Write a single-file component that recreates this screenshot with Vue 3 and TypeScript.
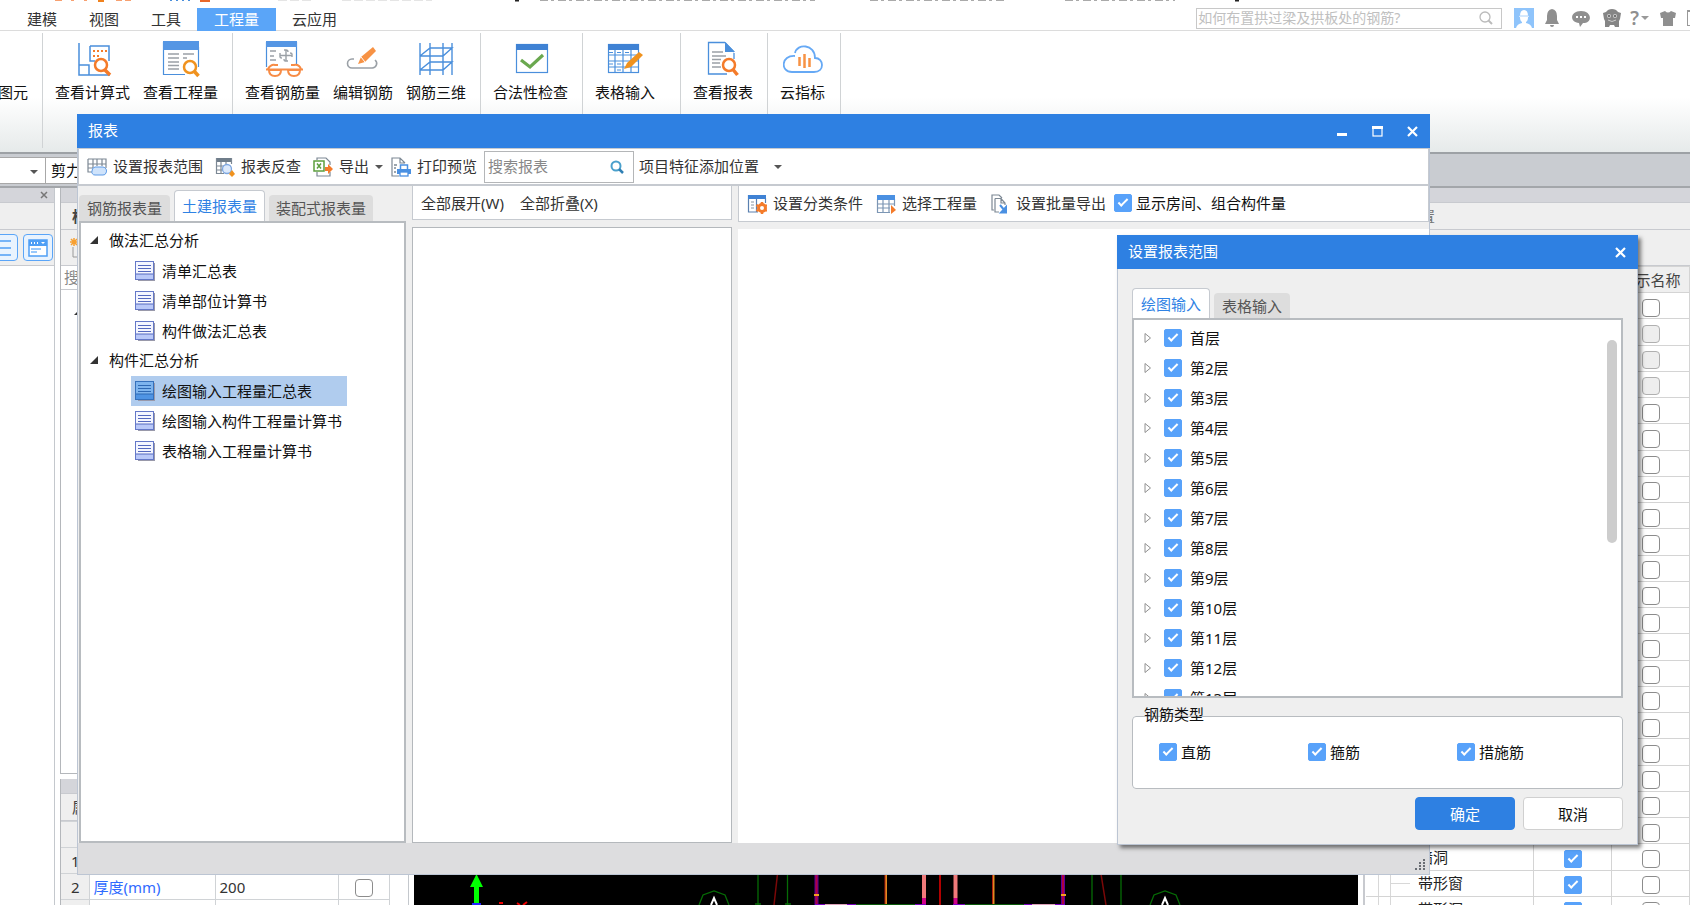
<script setup lang="ts">
import { ref } from 'vue'

interface RibbonItem { label: string; icon: string }
interface TreeGroup { label: string; children: string[] }
interface Floor { name: string; on: boolean }
interface LayerRow { name: string; shown: boolean; named: boolean; locked: boolean }

const menus: string[] = ['建模', '视图', '工具', '工程量', '云应用']
const activeMenu = ref('工程量')

const B = '#4a8fdc'
const O = '#f47b2a'
const icons: Record<string, string> = {
  calc: `<path d="M6 4V36H37M6 26H16V36" fill="none" stroke="${B}" stroke-width="1.5"/><path d="M17 7H36V22M17 7V22H22" fill="none" stroke="${B}" stroke-width="1.5"/><g fill="${O}"><rect x="20" y="11" width="2" height="2"/><rect x="24" y="11" width="2" height="2"/><rect x="28" y="11" width="2" height="2"/><rect x="32" y="11" width="2" height="2"/><rect x="20" y="16" width="2" height="2"/><rect x="24" y="16" width="2" height="2"/></g><circle cx="28" cy="26" r="6" fill="#fff" stroke="${O}" stroke-width="2.5"/><path d="M32 31L37 36" stroke="${O}" stroke-width="3.5"/>`,
  quantity: `<path d="M37.500 8V28M2.500 3V35.500H24" fill="none" stroke="${B}" stroke-width="1.200"/><rect x="2" y="2" width="36" height="9" fill="#5596e4"/><path d="M7 15H18M7 19H18M7 23H18M7 26.500H18M7 30H18M22 15H33M22 19H26" stroke="#9aa0a6" stroke-width="1.400"/><circle cx="29" cy="28" r="6" fill="#fff" stroke="#f0921e" stroke-width="2.500"/><path d="M33 32L37.500 37" stroke="#f0921e" stroke-width="3.500"/>`,
  rebar: `<path d="M3.500 3V28M33.500 3V26" stroke="${B}" stroke-width="1.200"/><rect x="3" y="2" width="31" height="6" fill="#5596e4"/><path d="M7 12H13M7 17H11M7 21H13M23 11V22M17 16.500H29M17 14V18Q17 19 19 19M29 18V15Q29 14 27 14M21 11H23Q25 11 25 13M25 22H22Q21 22 21 20" fill="none" stroke="#9aa0a6" stroke-width="1.400"/><path d="M5 30Q8 25 12 26H15M38 30Q36 25 31 26H28M3 30.500H40" fill="none" stroke="#f78c46" stroke-width="2"/><path d="M6 31Q6 37 12 37Q18 37 18 31ZM25 31Q25 37 31 37Q37 37 37 31Z" fill="#fff" stroke="#f78c46" stroke-width="2"/>`,
  edit: `<path d="M11 20H9A4.500 4.500 0 0 0 9 29H29A4.500 4.500 0 0 0 32 21" fill="none" stroke="#9aa0a6" stroke-width="1.600"/><path d="M15 25L18 18L30 8L33 12L22 23Z" fill="#f79244"/><path d="M18 18L22 23" stroke="#fff" stroke-width="1"/>`,
  frame: `<path d="M4 4V36M14 4V36M27 4V36M36 4V36M4 17L14 9H36L27 17H4M4 31L14 23H36L27 31H4" fill="none" stroke="${B}" stroke-width="1.400"/>`,
  check: `<rect x="5.500" y="5.500" width="31" height="28" fill="#fff" stroke="${B}" stroke-width="1.200"/><rect x="5" y="5" width="32" height="6" fill="#3f82d4"/><path d="M10 21L19 28L32 16" fill="none" stroke="#6aa84f" stroke-width="3.200"/>`,
  table: `<rect x="3.500" y="5.500" width="30" height="28" fill="#fff" stroke="${B}" stroke-width="1.200"/><rect x="3" y="5" width="31" height="6" fill="#3f82d4"/><path d="M10 11V33M18 11V33M26 11V33M3 16H34M3 22H34M3 28H34" stroke="${B}" stroke-width="1.200"/><path d="M4 13.500H8M12 13.500H16M20 13.500H24M4 25H8M12 25H16M12 31H16" stroke="${B}"/><path d="M19 30L22 24L34 13L38 16L26 28Z" fill="#f0921e"/>`,
  report: `<path d="M22 3.500H5.500V35H24M31 14V20M22 3.500L31 13" fill="none" stroke="${B}" stroke-width="1.300"/><path d="M22 3V13H32Z" fill="${B}"/><path d="M9 13H20M9 17H23M9 20.500H18M9 24H17M9 28H18" stroke="#9aa0a6" stroke-width="1.400"/><circle cx="26" cy="26" r="6" fill="#fff" stroke="${O}" stroke-width="2.500"/><path d="M30 30.500L34.500 36" stroke="${O}" stroke-width="3.500"/>`,
  cloud: `<path d="M12 17C-2 16 -3 33 9 33H31C42 33 41 19 32 19C32 5 14 4 12 14" fill="none" stroke="#66a9f5" stroke-width="1.800"/><path d="M16.500 18V27M21.500 15V29M26.500 19V28" stroke="#f79244" stroke-width="2.500"/>`,
  range: `<path d="M1 2H19V11M1 2V15H6M1 7H19M1 11H6M6 2V11M10 2V9M15 2V9" fill="none" stroke="#7c8894" stroke-width="1.200"/><path d="M8 10H16A4 4 0 0 1 19 16A3 3 0 0 1 16 18H8A3 3 0 0 1 5 14A4 4 0 0 1 8 10Z" fill="#cfe3fb" stroke="#5c9ae6"/>`,
  trace: `<rect x="1" y="1" width="16" height="4" fill="#6f7d8a"/><path d="M1.500 1V16.500H9M16.500 1V7M1 9H9M1 13H9M6 5V16M11 5V8" fill="none" stroke="#7c8894" stroke-width="1.200"/><circle cx="12" cy="12" r="4.500" fill="#dce9fb" stroke="#7ea7e0" stroke-width="1.300"/><path d="M17 13L20 17L17 20L14 17Z" fill="#f0921e"/>`,
  exporting: `<path d="M4 3V1H13L17 5V8M17 15V19H4V15" fill="none" stroke="#7c8894" stroke-width="1.200"/><rect x="1" y="4" width="10" height="10" fill="#fff" stroke="#5c9e3e" stroke-width="1.500"/><path d="M4 6.500L8 11.500M8 6.500L4 11.500" stroke="#5c9e3e" stroke-width="1.500"/><path d="M12 10H15V7L20 12L15 17V14H12Z" fill="${O}"/>`,
  print: `<path d="M14 6L9 1H1V19H8M9 1V6H14" fill="none" stroke="#7c8894" stroke-width="1.200"/><path d="M3 8H6M3 11H5M3 15H5" stroke="#7c8894" stroke-width="1.500"/><path d="M9.500 13V8H16.500V13" fill="#fff" stroke="#4a90e2" stroke-width="1.500"/><rect x="6" y="12" width="14" height="5" fill="#4a90e2"/><rect x="9" y="15" width="8" height="4" fill="#fff" stroke="#4a90e2" stroke-width="1.300"/>`,
  classify: `<path d="M1.500 1V18H11M18.500 4V9M9.500 4V18" fill="none" stroke="#5a80b0" stroke-width="1.200"/><rect x="1" y="1" width="18" height="4" fill="#3f82d4"/><path d="M4 8H7M4 11H7M4 14H7" stroke="#8793a0"/><circle cx="15" cy="14" r="3.500" fill="#fff" stroke="${O}" stroke-width="3"/><path d="M15 8V10M15 18V20M9.500 11L11 12M19 16L20 17M9.500 17L11 16M19 12L20 11" stroke="${O}" stroke-width="2.500"/>`,
  pick: `<path d="M1.500 5V18.500H14M18.500 5V12M1 10H19M1 14H14M7 5V18M13 5V18" fill="none" stroke="#7c96b4" stroke-width="1.200"/><rect x="1" y="1" width="18" height="5" fill="#4a90e2"/><path d="M15 11L20 16L15 20Z" fill="${O}"/>`,
  batch: `<path d="M4 16H2V1H9L12 4M5 4.500H11L15 9V11M5 4.500V18H9M11 4.500V9H15" fill="none" stroke="#7c8894" stroke-width="1.200"/><path d="M10 11L15 17M11 18.500H16V13Z" fill="#4a90e2" stroke="#4a90e2" stroke-width="2"/>`,
}

const ribbon: RibbonItem[][] = [
  [{ label: '查看计算式', icon: 'calc' }, { label: '查看工程量', icon: 'quantity' }],
  [{ label: '查看钢筋量', icon: 'rebar' }, { label: '编辑钢筋', icon: 'edit' }, { label: '钢筋三维', icon: 'frame' }],
  [{ label: '合法性检查', icon: 'check' }],
  [{ label: '表格输入', icon: 'table' }],
  [{ label: '查看报表', icon: 'report' }],
  [{ label: '云指标', icon: 'cloud' }],
]

const reportTabs: string[] = ['钢筋报表量', '土建报表量', '装配式报表量']
const activeReportTab = ref('土建报表量')
const tree: TreeGroup[] = [
  { label: '做法汇总分析', children: ['清单汇总表', '清单部位计算书', '构件做法汇总表'] },
  { label: '构件汇总分析', children: ['绘图输入工程量汇总表', '绘图输入构件工程量计算书', '表格输入工程量计算书'] },
]
const selectedReport = ref('绘图输入工程量汇总表')
const showRooms = ref(true)

const rangeTabs: string[] = ['绘图输入', '表格输入']
const activeRangeTab = ref('绘图输入')
const floors = ref<Floor[]>(
  Array.from({ length: 13 }, (_, i) => ({ name: i === 0 ? '首层' : `第${i + 1}层`, on: true })),
)
const rebarTypes = ref<Floor[]>([
  { name: '直筋', on: true },
  { name: '箍筋', on: true },
  { name: '措施筋', on: true },
])

const layerNames: Record<number, string> = { 21: '墙洞', 22: '带形窗', 23: '带形洞' }
const layers = ref<LayerRow[]>(
  Array.from({ length: 24 }, (_, i) => ({
    name: layerNames[i] ?? '', shown: true, named: false, locked: i >= 1 && i <= 3,
  })),
)
const thicknessExtra = ref(false)
const nextExtra = ref(false)
</script>

<template>
  <div class="app">
    <header class="menubar">
      <svg class="titlebits" width="1240" height="2" aria-hidden="true">
        <path d="M55 0H62M71 0H74M84 0H87" stroke="#f7a070" stroke-width="2" />
        <path d="M98 0H104" stroke="#f0821e" stroke-width="4" />
        <path d="M116 0H122M125 0H131" stroke="#f7a070" stroke-width="2" />
        <path d="M170 0H172M176 0H178M182 0H184M188 0H190" stroke="#4a8fdc" stroke-width="2" />
        <path d="M200 0H210" stroke="#e8682a" stroke-width="4" />
        <path d="M278 0H312M342 0H432" stroke="#ccc" stroke-width="1" stroke-dasharray="9 3" />
        <path d="M540 0H815M870 0H1005M1065 0H1175" stroke="#aaa" stroke-width="2" stroke-dasharray="8 3 3 4" />
        <path d="M515 0H519M1235 0H1239" stroke="#222" stroke-width="3" />
      </svg>
      <nav class="menus">
        <button v-for="m in menus" :key="m" type="button" class="menu" :class="{ on: m === activeMenu }" @click="activeMenu = m">{{ m }}</button>
      </nav>
      <div class="account">
        <div class="ask">
          <input type="text" aria-label="搜索帮助" placeholder="如何布置拱过梁及拱板处的钢筋?" />
          <svg width="16" height="16" viewBox="0 0 16 16"><circle cx="7" cy="7" r="5" fill="none" stroke="#bbb" stroke-width="1.300" /><path d="M10.500 10.500L14 14" stroke="#bbb" stroke-width="2" /></svg>
        </div>
        <svg width="20" height="20" viewBox="0 0 20 20"><rect width="20" height="20" fill="#8fc4fb" /><path d="M6 8Q6 2 10 2Q14 2 14 8L15 8V9H14Q14 13 12 14V15Q17 16 18 20H2Q3 16 8 15V14Q6 13 6 9H5V8Z" fill="#fff" /><path d="M5 8H15" stroke="#a9d1fb" /></svg>
        <svg width="16" height="20" viewBox="0 0 16 20"><path d="M8 1Q13 2 13 8V12L15 16H1L3 12V8Q3 2 8 1ZM6 17H10Q10 19 8 19Q6 19 6 17Z" fill="#8f8f8f" /></svg>
        <svg width="18" height="20" viewBox="0 0 18 20"><path d="M9 3C20 3 21 15 11 15L8 19L7 15C-3 14 -2 3 9 3Z" fill="#8f8f8f" /><path d="M4 9H6M8 9H10M12 9H14" stroke="#fff" stroke-width="2" /></svg>
        <svg width="20" height="20" viewBox="0 0 20 20"><path d="M10 1Q14 1 16 4L19 5L18 11L17 13V19H13L12 17H8L7 19H3V13L2 11L1 5L4 4Q6 1 10 1Z" fill="#858585" /><circle cx="7" cy="8" r="2" fill="#ccc" /><circle cx="13" cy="8" r="2" fill="#ccc" /><circle cx="7" cy="8" r="1" fill="#555" /><circle cx="13" cy="8" r="1" fill="#555" /><path d="M6 12Q10 15 14 12" fill="none" stroke="#ccc" /></svg>
        <button type="button" class="help">?<i class="caret"></i></button>
        <svg width="18" height="18" viewBox="0 0 18 18"><path d="M6 2Q9 5 12 2L17 4L16 9H14V17H4V9H2L1 4Z" fill="#8f8f8f" /></svg>
        <i class="edge"></i>
      </div>
    </header>

    <div class="ribbon">
      <div class="group clip">
        <button type="button" class="tool"><span class="stub"></span><span class="cap">查看图元</span></button>
      </div>
      <div v-for="(g, i) in ribbon" :key="i" class="group">
        <button v-for="t in g" :key="t.icon" type="button" class="tool">
          <svg width="40" height="40" viewBox="0 0 40 40" v-html="icons[t.icon]"></svg>
          <span class="cap">{{ t.label }}</span>
        </button>
      </div>
    </div>

    <div class="strip">
      <button type="button" class="pick" aria-label="楼层"><i class="caret"></i></button>
      <button type="button" class="pick kind">剪力墙</button>
    </div>

    <main class="work">
      <aside class="nav">
        <div class="head"><button type="button" aria-label="关闭"><svg width="8" height="8" viewBox="0 0 8 8"><path d="M1 1L7 7M7 1L1 7" stroke="#777" stroke-width="1.500" /></svg></button></div>
        <div class="navtitle"></div>
        <div class="navtools">
          <button type="button" class="sq" aria-label="列表"><svg width="20" height="20" viewBox="0 0 20 20"><path d="M0 3H18M0 10H18M0 17H18" stroke="#4f9ff5" stroke-width="1.500" /></svg></button>
          <button type="button" class="sq" aria-label="窗口"><svg width="20" height="20" viewBox="0 0 20 20"><rect x="1" y="2" width="18" height="16" fill="#fff" stroke="#4f9ff5" stroke-width="1.500" /><rect x="1" y="2" width="18" height="6" fill="#4f9ff5" /><path d="M3 5H4M6 5H7M9 5H10" stroke="#fff" stroke-width="2" /><path d="M3 11H13M3 14H9" stroke="#7ab8fa" stroke-width="1.500" /><path d="M13 4H17L15 6Z" fill="#fff" /></svg></button>
        </div>
      </aside>

      <aside class="props">
        <section class="complist">
          <div class="head"></div>
          <div class="ptitle">构件列表</div>
          <div class="picons"><svg width="20" height="22" viewBox="0 0 20 22"><path d="M5 1V9M1 5H9M2 2L8 8M8 2L2 8" stroke="#f7a030" stroke-width="1.500" /><path d="M4 10V20H18" fill="none" stroke="#999" /></svg></div>
          <div class="psearch">搜索构件</div>
          <div class="ptree"><i class="open"></i></div>
        </section>
        <section class="proplist">
          <div class="head"></div>
          <div class="ptitle">属性列表</div>
          <table class="ptable">
            <colgroup><col class="c1" /><col class="c2" /><col class="c3" /><col class="c4" /></colgroup>
            <thead><tr><th></th><th></th><th></th><th></th></tr></thead>
            <tbody>
              <tr><td>1</td><td>名称</td><td></td><td></td></tr>
              <tr><td>2</td><td class="link">厚度(mm)</td><td>200</td><td><input v-model="thicknessExtra" type="checkbox" aria-label="厚度附加" /></td></tr>
              <tr><td></td><td></td><td></td><td><input v-model="nextExtra" type="checkbox" aria-label="附加" /></td></tr>
            </tbody>
          </table>
        </section>
      </aside>

      <div class="canvas">
        <svg width="944" height="31" viewBox="414 874 944 31" aria-hidden="true">
          <path d="M476.500 874L483 887H479V903H474V887H470Z" fill="#0f0" /><path d="M472 904H481" stroke="#22f" stroke-width="2" />
          <path d="M499 903H503M517 903L520 905M523 905L527 902" stroke="#e00" stroke-width="2" />
          <g fill="none" stroke="#066b06" stroke-width="1.300">
            <path d="M699 905L703 895L714 891L725 895L729 905M1150 905L1154 895L1165 891L1176 895L1180 905" />
            <path d="M758 874V905M787.500 874V905M1092 874V905M1121 874V905M755 904H761M785 904H791" />
          </g>
          <path d="M711 905L714 898L717 905M1162 905L1165 898L1168 905" fill="none" stroke="#fff" stroke-width="2" />
          <path d="M777.500 874L774 905M1101 874L1106 905" stroke="#7a0808" stroke-width="1.500" />
          <path d="M816.500 874V905M1063 874V905" stroke="#5a009a" stroke-width="4" />
          <path d="M816.500 874V905M1063 874V905" stroke="#b00040" stroke-width="2" />
          <path d="M814 895H819M1061 895H1066" stroke="#f0a020" stroke-width="2" />
          <path d="M886 874V905M993.500 874V905" stroke="#e08a20" stroke-width="2" />
          <path d="M885 874V905M992.500 874V905" stroke="#b02010" />
          <path d="M940 874V905" stroke="#b00000" stroke-width="2" />
          <path d="M924 874V898M955.500 874V898" stroke="#f07a7a" stroke-width="4" />
          <path d="M924 898V905M955.500 898V905" stroke="#d0008a" stroke-width="4" />
          <path d="M856 904.500H915M965 904.500H1024" stroke="#0a5a0a" />
          <path d="M815 904.500H856M915 904.500H926M953 904.500H965M1024 904.500H1065" stroke="#7a00c0" />
          <path d="M825 904.500H847M1032 904.500H1055" stroke="#dba0b8" />
        </svg>
      </div>

      <aside class="layers">
        <div class="head"></div>
        <div class="ltitle">显示设置</div>
        <div class="lbar"></div>
        <table class="ltable">
          <colgroup><col /><col class="l2" /><col class="l3" /></colgroup>
          <thead><tr><th>图层</th><th>显示</th><th>显示名称</th></tr></thead>
          <tbody>
            <tr v-for="(r, i) in layers" :key="i">
              <td><span class="node">{{ r.name }}</span></td>
              <td><input v-model="r.shown" type="checkbox" :aria-label="`显示图元 ${i + 1}`" /></td>
              <td><input v-model="r.named" type="checkbox" :disabled="r.locked" :aria-label="`显示名称 ${i + 1}`" /></td>
            </tr>
          </tbody>
        </table>
      </aside>
    </main>

    <section class="window" role="dialog" aria-label="报表">
      <header class="title">
        <span>报表</span>
        <div class="wbtns">
          <button type="button" aria-label="最小化"><svg width="11" height="11" viewBox="0 0 11 11"><path d="M0 8.500H10" stroke="#fff" stroke-width="3" /></svg></button>
          <button type="button" aria-label="最大化"><svg width="11" height="11" viewBox="0 0 11 11"><rect x="1" y="1" width="9" height="9" fill="none" stroke="#fff" stroke-width="1.200" /><path d="M0 1.500H11" stroke="#fff" stroke-width="3" /></svg></button>
          <button type="button" aria-label="关闭"><svg width="11" height="11" viewBox="0 0 11 11"><path d="M1 1L10 10M10 1L1 10" stroke="#fff" stroke-width="2.200" /></svg></button>
        </div>
      </header>
      <div class="toolbar">
        <button type="button" class="tb"><svg width="20" height="20" viewBox="0 0 20 20" v-html="icons.range"></svg><span>设置报表范围</span></button>
        <button type="button" class="tb"><svg width="20" height="20" viewBox="0 0 20 20" v-html="icons.trace"></svg><span>报表反查</span></button>
        <button type="button" class="tb"><svg width="20" height="20" viewBox="0 0 20 20" v-html="icons.exporting"></svg><span>导出</span><i class="caret"></i></button>
        <button type="button" class="tb"><svg width="20" height="20" viewBox="0 0 20 20" v-html="icons.print"></svg><span>打印预览</span></button>
        <div class="search">
          <input type="text" aria-label="搜索报表" placeholder="搜索报表" />
          <svg width="14" height="14" viewBox="0 0 14 14"><circle cx="6" cy="6" r="4.500" fill="none" stroke="#4aa0cc" stroke-width="2" /><path d="M9 9L13 13" stroke="#2f7fb4" stroke-width="2.500" /></svg>
        </div>
        <button type="button" class="tb wide"><span>项目特征添加位置</span><i class="caret"></i></button>
      </div>
      <div class="body">
        <div class="leftcol">
          <div class="tabs" role="tablist">
            <button v-for="t in reportTabs" :key="t" type="button" role="tab" class="tab" :class="{ on: t === activeReportTab }" :aria-selected="t === activeReportTab" @click="activeReportTab = t">{{ t }}</button>
          </div>
          <ul class="tree">
            <li v-for="g in tree" :key="g.label">
              <div class="row"><i class="open"></i>{{ g.label }}</div>
              <ul>
                <li v-for="c in g.children" :key="c">
                  <button type="button" class="leaf" :class="{ on: c === selectedReport }" @click="selectedReport = c">
                    <svg width="20" height="20" viewBox="0 0 20 20"><path d="M3 19.500H19.500V2" fill="none" stroke="#99a" stroke-width="1.500" /><rect class="pg" x="0.500" y="0.500" width="18" height="18" /><rect class="ft" x="1" y="13" width="17" height="5" /><path class="ln" d="M3 4.500H16M3 7.500H16M3 10.500H16M1 13H18" /></svg>{{ c }}
                  </button>
                </li>
              </ul>
            </li>
          </ul>
        </div>
        <div class="midcol">
          <div class="bar"><button type="button"><span>全部展开(W)</span></button><button type="button"><span>全部折叠(X)</span></button></div>
          <div class="pane"></div>
        </div>
        <div class="rightcol">
          <div class="bar">
            <button type="button" class="tb"><svg width="20" height="20" viewBox="0 0 20 20" v-html="icons.classify"></svg><span>设置分类条件</span></button>
            <button type="button" class="tb"><svg width="20" height="20" viewBox="0 0 20 20" v-html="icons.pick"></svg><span>选择工程量</span></button>
            <button type="button" class="tb"><svg width="20" height="20" viewBox="0 0 20 20" v-html="icons.batch"></svg><span>设置批量导出</span></button>
            <label class="ck"><input v-model="showRooms" type="checkbox" />显示房间、组合构件量</label>
          </div>
          <div class="view"></div>
        </div>
      </div>
      <footer class="status">
        <svg width="12" height="12" viewBox="0 0 12 12"><path d="M9 1H11M9 4H11M5 4H7M5 7H7M9 7H11M1 10H3M5 10H7M9 10H11" stroke="#6a6e74" stroke-width="2" /></svg>
      </footer>
    </section>

    <section class="dialog" role="dialog" aria-label="设置报表范围">
      <header class="title">
        <span>设置报表范围</span>
        <div class="wbtns"><button type="button" aria-label="关闭"><svg width="11" height="11" viewBox="0 0 11 11"><path d="M1 1L10 10M10 1L1 10" stroke="#fff" stroke-width="2.200" /></svg></button></div>
      </header>
      <div class="dbody">
        <div class="tabs" role="tablist">
          <button v-for="t in rangeTabs" :key="t" type="button" role="tab" class="tab" :class="{ on: t === activeRangeTab }" :aria-selected="t === activeRangeTab" @click="activeRangeTab = t">{{ t }}</button>
        </div>
        <div class="floors">
          <ul>
            <li v-for="f in floors" :key="f.name">
              <svg width="8" height="12" viewBox="0 0 8 12"><path d="M1 1.500L6.500 6L1 10.500Z" fill="#fff" stroke="#909090" /></svg>
              <label><input v-model="f.on" type="checkbox" />{{ f.name }}</label>
            </li>
          </ul>
          <i class="thumb"></i>
        </div>
        <fieldset class="kinds">
          <legend>钢筋类型</legend>
          <label v-for="r in rebarTypes" :key="r.name" class="ck"><input v-model="r.on" type="checkbox" />{{ r.name }}</label>
        </fieldset>
        <div class="actions">
          <button type="button" class="ok">确定</button>
          <button type="button" class="cancel">取消</button>
        </div>
      </div>
    </section>
  </div>
</template>

<style>
html, body { margin: 0; overflow: hidden; }
</style>

<style scoped>
.app {
  position: relative; display: flex; flex-direction: column; height: 100vh; overflow: hidden;
  background: #fff; color: #222; font: 15px/22px "Noto Sans", "Noto Sans CJK SC", sans-serif;
}
.app *, .app *::before { box-sizing: border-box; }
button { font: inherit; color: inherit; background: none; border: 0; padding: 0; margin: 0; white-space: nowrap; }
svg { display: block; flex: none; }
ul { list-style: none; margin: 0; padding: 0; }
table { border-collapse: collapse; table-layout: fixed; }
.caret { display: inline-block; border: 4px solid transparent; border-top-color: #555; border-bottom: 0; }
.open { flex: none; width: 8px; height: 8px; background: #333; clip-path: polygon(100% 0, 100% 100%, 0 100%); }
input[type="checkbox"] {
  appearance: none; flex: none; width: 18px; height: 18px; margin: 0;
  border: 1px solid #8c8c8c; border-radius: 4px; background: #fff; display: inline-grid; place-content: center; vertical-align: middle;
}
input[type="checkbox"]:disabled { background: #eee; border-color: #b0b0b0; }
input[type="checkbox"]:checked { background: #58a2fa; border-color: #58a2fa; border-radius: 2px; }
input[type="checkbox"]:checked::before {
  content: ""; width: 10px; height: 5px; margin-bottom: 3px;
  border: solid #fff; border-width: 0 0 2px 2px; transform: rotate(-45deg);
}

.menubar { position: relative; flex: none; display: flex; justify-content: space-between; height: 31px; border-bottom: 1px solid #dcdcdc; color: #333; }
.titlebits { position: absolute; left: 0; top: 0; }
.menus { display: flex; padding: 8px 0 0 11px; }
.menu { height: 23px; padding: 0 16px 2px; }
.menu.on { padding: 0 17px 2px; background: #5aa5f8; color: #fff; }
.account { display: flex; align-items: center; gap: 12px; padding-top: 6px; overflow: hidden; }
.ask { display: flex; align-items: center; width: 306px; height: 21px; border: 1px solid #c8c8c8; padding-right: 7px; }
.ask input { flex: 1; min-width: 0; border: 0; outline: 0; padding: 0 1px; font: inherit; font-size: 14px; line-height: 18px; height: 18px; }
.ask input::placeholder { color: #c0c0c0; opacity: 1; }
.ask + svg { margin-right: -2px; }
.help { display: flex; align-items: center; gap: 2px; color: #8f8f8f; font-size: 19px; font-weight: 600; margin: 0 -2px 0 -4px; }
.help .caret { border-top-color: #999; }
.edge { width: 3px; height: 16px; border: solid #999; border-width: 2px 0 1px 1px; margin-left: -2px; }

.ribbon {
  flex: none; display: grid; grid-template-columns: 43px 190px 248px 102px 98px 87px 73px 1fr;
  height: 121px; background: linear-gradient(#fff 55%, #e6eaea); color: #111;
}
.group { display: flex; align-items: flex-start; gap: 13px; margin: 2px 0 4px; padding: 6px 0 0 12px; border-right: 1px solid #d0d3d5; }
.group.clip { justify-content: flex-end; padding: 6px 14px 0 0; overflow: hidden; }
.tool { display: flex; flex-direction: column; align-items: center; }
.cap { line-height: 26px; }
.stub { width: 1px; height: 18px; margin: 18px 0 4px; background: #aaa; }

.strip { flex: none; display: flex; align-items: center; height: 36px; background: #c9ccd1; border-top: 2px solid #9da1a5; border-bottom: 2px solid #a3a6aa; }
.pick { width: 46px; height: 27px; background: #fff; border: 1px solid #a8a8a8; border-width: 1px 1px 1px 0; text-align: right; padding-right: 7px; }
.pick .caret { vertical-align: middle; }
.pick.kind { width: 120px; text-align: left; padding-left: 5px; color: #111; }

.work { flex: 1; min-height: 0; display: flex; }
.head { flex: none; display: flex; justify-content: flex-end; align-items: center; height: 15px; padding-right: 6px; background: #d4d5da; border-bottom: 1px solid #c8cacf; }
.nav { flex: none; width: 55px; border-right: 1px solid #c4c8cd; }
.navtitle { height: 27px; background: #efefef; border-bottom: 1px solid #c8cacf; }
.navtools { display: flex; justify-content: flex-end; align-items: center; gap: 5px; height: 36px; padding-right: 1px; background: #efefef; border-bottom: 1px solid #c8cacf; }
.sq { display: grid; place-content: center; flex: none; width: 30px; height: 27px; background: #e9f3fe; border: 1px solid #5aa5f8; border-radius: 4px; }
.props { flex: none; display: flex; flex-direction: column; gap: 5px; width: 349px; margin-left: 5px; border-right: 1px solid #c4c8cd; }
.complist, .proplist { border-left: 1px solid #b4b7bb; display: flex; flex-direction: column; }
.complist { flex: 1; min-height: 0; border-bottom: 1px solid #b4b7bb; }
.proplist { flex: none; height: 126px; overflow: hidden; }
.ptitle { flex: none; height: 27px; line-height: 27px; padding-left: 11px; background: #efefef; border-bottom: 1px solid #c8cacf; font-weight: 700; color: #444; }
.proplist .ptitle { font-weight: 400; }
.picons { flex: none; height: 36px; padding: 7px 8px; background: #efefef; border-bottom: 1px solid #c8cacf; }
.psearch { flex: none; height: 24px; padding-left: 3px; color: #888; border-bottom: 1px solid #c8cacf; }
.ptree { display: flex; padding: 17px 13px; }
.ptable { width: 328px; color: #333; }
.ptable .c1 { width: 28px; }
.ptable .c2 { width: 126px; }
.ptable .c3 { width: 123px; }
.ptable .c4 { width: 51px; }
.ptable th, .ptable td { height: 26px; padding: 0 4px; border: 1px solid #d0d3d6; border-left: 0; line-height: 22px; }
.ptable th, .ptable td:first-child { background: #efefef; }
.ptable td:first-child { text-align: right; padding-right: 9px; }
.ptable td:last-child { text-align: center; }
.ptable .link { color: #2f6bff; }
.canvas { flex: 1; min-width: 0; margin-left: 5px; background: #000; display: flex; align-items: flex-end; overflow: hidden; }
.layers { flex: none; width: 332px; display: flex; flex-direction: column; border-left: 5px solid #fff; box-shadow: inset 2px 0 #c8cacf; overflow: hidden; }
.ltitle { flex: none; height: 27px; line-height: 26px; padding-left: 12px; background: #efefef; border-bottom: 1px solid #c8cacf; color: #777; }
.lbar { flex: none; height: 36px; background: #efefef; border-bottom: 1px solid #c8cacf; }
.ltable { flex: none; width: 324px; height: 657px; margin: 0 0 0 3px; }
.ltable .l2, .ltable .l3 { width: 78px; }
.ltable th, .ltable td { border: solid #d4d4d4; border-width: 1px 1px 1px 0; padding: 0; text-align: center; line-height: 22px; height: 26px; }
.ltable th { background: #efefef; font-weight: 400; color: #444; }
.ltable td:first-child {
  text-align: left; padding-left: 24px;
  background: linear-gradient(#d8d8d8, #d8d8d8) 12px 0 / 1px 100% no-repeat, linear-gradient(#d8d8d8, #d8d8d8) 24px 0 / 1px 100% no-repeat;
}
.node { display: flex; align-items: center; gap: 8px; }
.node::before { content: ""; width: 20px; height: 1px; background: #d8d8d8; }

.window {
  position: absolute; left: 77px; right: 260px; top: 114px; bottom: 30px; display: flex; flex-direction: column;
  background: #efefef; border: solid #bcc5d3; border-width: 0 1px 1px; color: #333;
}
.title { flex: none; display: flex; justify-content: space-between; align-items: center; height: 34px; margin: 0 -1px; padding: 0 12px 0 11px; background: #2e80e2; color: #fff; }
.title span, .tb span, .bar span { padding-bottom: 2px; }
.wbtns { display: flex; gap: 24px; }
.toolbar { flex: none; display: flex; align-items: center; height: 38px; padding-left: 8px; gap: 12px; background: #fff; border: solid #c6cad0; border-width: 1px 1px 2px; }
.tb { display: flex; align-items: center; gap: 6px; height: 28px; }
.tb .caret { margin-right: -4px; }
.search { display: flex; align-items: center; width: 150px; height: 32px; margin: 0 -7px 0 -5px; padding: 0 9px 0 3px; border: 1px solid #b4b6b8; background: #fff; }
.search input { flex: 1; min-width: 0; border: 0; outline: 0; padding: 0 0 2px; font: inherit; }
.search input::placeholder { color: #888; opacity: 1; }
.tb.wide { gap: 15px; }
.body { flex: 1; min-height: 0; display: flex; gap: 6px; }
.leftcol { flex: none; width: 328px; display: flex; flex-direction: column; padding-left: 1px; }
.tabs { flex: none; display: flex; align-items: flex-end; gap: 4px; }
.tab { height: 26px; padding: 0 7px; background: #dddddd; border-radius: 4px 4px 0 0; color: #555; }
.tab.on { height: 31px; background: #fff; border: 1px solid #c6cad0; border-bottom: 0; color: #2f82e4; }
.leftcol .tabs { height: 35px; }
.leftcol .tab:first-child { padding: 0 8px; }
.tree { flex: 1; border: 2px solid #b8bcc0; background: #fff; padding: 3px 0 0 9px; color: #111; }
.row { display: flex; align-items: center; gap: 11px; height: 30px; padding-bottom: 2px; }
.leaf { display: flex; align-items: center; gap: 7px; height: 30px; min-width: 216px; margin-left: 41px; padding-left: 4px; }
.leaf.on { background: #b0ccee; }
.pg { fill: #f4f6ff; stroke: #6478c8; }
.ft { fill: #b9c8f8; }
.ln { fill: none; stroke: #5468be; stroke-width: 1.200; }
.leaf.on .pg { fill: #7db4ee; stroke: #3570bc; }
.leaf.on .ft { fill: #4f94e4; }
.leaf.on .ln { stroke: #2d68b4; }
.midcol { flex: none; width: 320px; display: flex; flex-direction: column; gap: 7px; }
.bar { flex: none; display: flex; align-items: center; background: #fff; border: 1px solid #c6cad0; border-top: 0; }
.midcol .bar { height: 34px; padding-left: 8px; gap: 16px; }
.pane { flex: 1; background: #fff; border: 1px solid #b4b8bc; }
.rightcol { flex: 1; min-width: 0; display: flex; flex-direction: column; gap: 7px; }
.rightcol .bar { height: 36px; padding-left: 8px; gap: 13px; }
.rightcol .bar .ck { margin-left: -5px; padding-bottom: 2px; color: #111; }
.view { flex: 1; background: #fff; }
.ck { display: flex; align-items: center; gap: 4px; white-space: nowrap; }
.status { flex: none; display: flex; justify-content: flex-end; align-items: flex-end; height: 31px; padding: 3px; background: #dddddf; }

.dialog {
  position: absolute; right: 52px; top: 235px; width: 521px; display: flex; flex-direction: column;
  background: #efefef; border: solid #bcc5d3; border-width: 0 1px 1px; box-shadow: 3px 3px 4px rgba(0, 0, 0, 0.5); color: #111;
}
.dbody { display: flex; flex-direction: column; padding: 19px 14px 14px; }
.dbody .tab { height: 25px; padding: 0 8px; }
.dbody .tab.on { height: 30px; }
.floors { position: relative; height: 380px; border: 2px solid #b8bcc0; background: #fff; overflow: hidden; padding: 3px 0 0 10px; }
.floors li { display: flex; align-items: center; gap: 12px; height: 30px; }
.floors label { display: flex; align-items: center; gap: 8px; }
.thumb { position: absolute; right: 4px; top: 20px; width: 10px; height: 203px; border-radius: 5px; background: #cdcdcd; }
.kinds { position: relative; display: grid; grid-template-columns: 149px 149px 1fr; align-items: start; height: 73px; margin: 18px 0 8px; padding: 24px 0 0 26px; border: 1px solid #b8bcc0; border-radius: 4px; background: #fff; }
.kinds legend { position: absolute; left: 11px; top: -14px; padding: 0; }
.actions { display: flex; justify-content: flex-end; gap: 8px; }
.actions button { width: 100px; height: 33px; border-radius: 4px; border: 1px solid #d0d0d0; background: #fff; }
.actions .ok { background: #2e80e2; border-color: #2e80e2; color: #fff; }
</style>
